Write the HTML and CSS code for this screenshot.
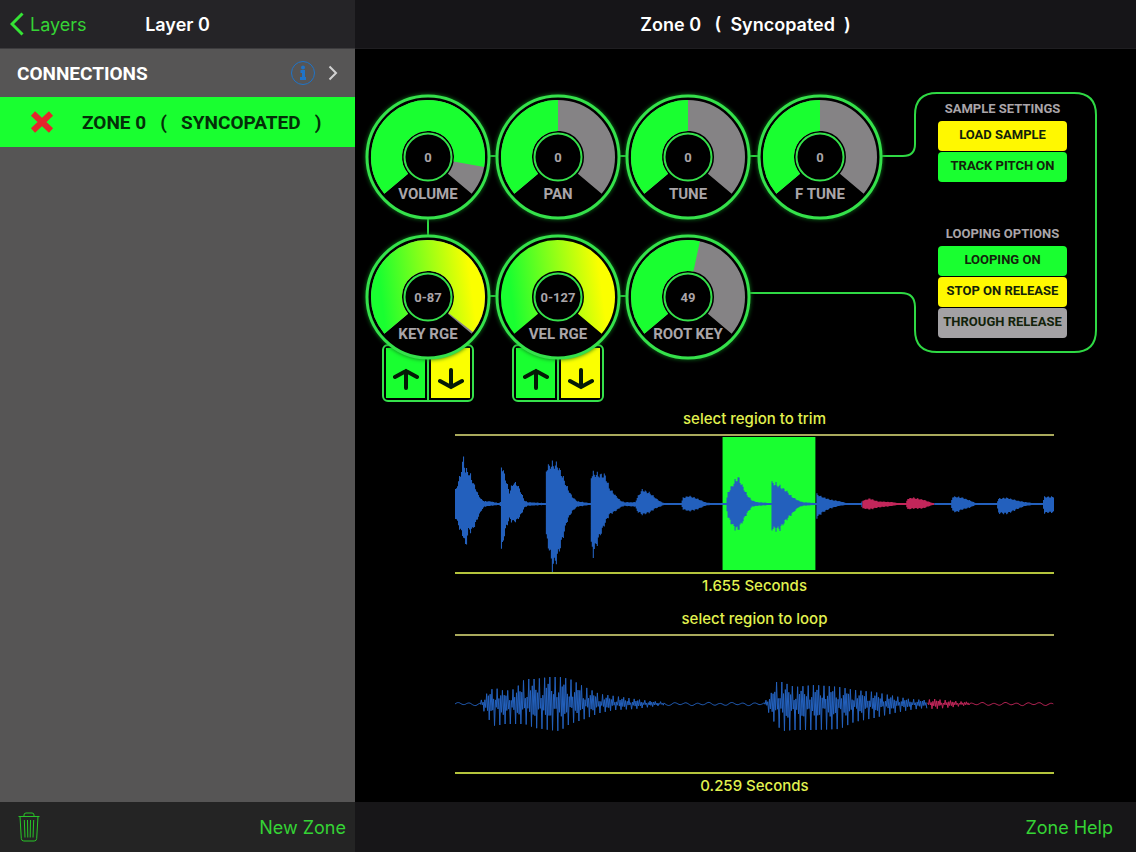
FILE: index.html
```html
<!DOCTYPE html>
<html lang="en">
<head>
  <meta charset="UTF-8" />
  <meta name="viewport" content="width=device-width, initial-scale=1.0"/>
  <title>Zone 0 - Syncopated</title>
  <link rel="stylesheet" href="styles.css">
</head>
<body>
  <aside class="sidebar">
    <header class="bar sidebar-bar">
      <a class="back" href="#layers">
        <svg width="14" height="24" viewBox="0 0 14 24"><path d="M12.500 1.500 2 12l10.500 10.500"/></svg>
        Layers
      </a>
      <h1 class="bar-title">Layer 0</h1>
    </header>

    <nav class="list">
      <a class="row connections" href="#connections">
        <span>CONNECTIONS</span>
        <svg class="info" width="26" height="26" viewBox="0 0 26 26">
          <circle cx="13" cy="13" r="11.500"/>
          <path class="info-i" d="M10.500 11.500h3v7M10 18.500h6"/>
          <circle class="info-dot" cx="13" cy="7.500" r="2"/>
        </svg>
        <svg class="chevron" width="10" height="16" viewBox="0 0 10 16"><path d="M1.500 1.500 8 8l-6.500 6.500"/></svg>
      </a>
      <div class="row zone">
        <button class="remove" aria-label="Remove zone">
          <svg width="24" height="24" viewBox="0 0 24 24"><path d="M3 3.500 21 20.500M21 3.500 3 20.500"/></svg>
        </button>
        <a class="zone-link" href="#zone-0">ZONE 0   (   SYNCOPATED   )</a>
      </div>
    </nav>

    <footer class="bar sidebar-foot">
      <button class="trash" aria-label="Delete">
        <svg width="22" height="30" viewBox="0 0 22 30">
          <path d="M.5 4.500h21M6 4.500V3q0-2 2-2h6q2 0 2 2v1.500M2 4.500l1.300 22q.2 2.500 2.500 2.500h10.400q2.300 0 2.500-2.500l1.300-22M6.300 8l.7 17.500M9.500 8l.3 17.500M12.500 8l-.3 17.500M15.700 8 15 25.500"/>
        </svg>
      </button>
      <button class="text-btn">New Zone</button>
    </footer>
  </aside>

  <main class="detail">
    <header class="bar detail-bar">
      <h2 class="bar-title">Zone 0   (  Syncopated  )</h2>
    </header>

    <div class="content">
      <section class="console">
        <svg class="wires" width="745" height="310" viewBox="0 0 745 310">
          <path d="M73 107H548Q560 107 560 95V66Q560 44 582 44H719Q741 44 741 66V281Q741 303 719 303H582Q560 303 560 281V258Q560 244 546 244H333M73 107V247H333"/>
        </svg>

        <div class="knobs">
          <div class="knob">
            <svg class="dial" viewBox="0 0 126 126">
              <circle class="ring" cx="63" cy="63" r="61"/>
              <circle class="track" cx="63" cy="63" r="41.500" pathLength="360"/>
              <circle class="fill" cx="63" cy="63" r="41.500" pathLength="360" stroke-dasharray="230 360"/>
              <circle class="hub" cx="63" cy="63" r="23.500"/>
            </svg>
            <output class="value" for="volume">0</output>
            <label class="name" for="volume">VOLUME</label>
            <input class="drag" type="range" id="volume" min="-90" max="12" value="0">
          </div>
          <div class="knob">
            <svg class="dial" viewBox="0 0 126 126">
              <circle class="ring" cx="63" cy="63" r="61"/>
              <circle class="track" cx="63" cy="63" r="41.500" pathLength="360"/>
              <circle class="fill" cx="63" cy="63" r="41.500" pathLength="360" stroke-dasharray="130 360"/>
              <circle class="hub" cx="63" cy="63" r="23.500"/>
            </svg>
            <output class="value" for="pan">0</output>
            <label class="name" for="pan">PAN</label>
            <input class="drag" type="range" id="pan" min="-100" max="100" value="0">
          </div>
          <div class="knob">
            <svg class="dial" viewBox="0 0 126 126">
              <circle class="ring" cx="63" cy="63" r="61"/>
              <circle class="track" cx="63" cy="63" r="41.500" pathLength="360"/>
              <circle class="fill" cx="63" cy="63" r="41.500" pathLength="360" stroke-dasharray="130 360"/>
              <circle class="hub" cx="63" cy="63" r="23.500"/>
            </svg>
            <output class="value" for="tune">0</output>
            <label class="name" for="tune">TUNE</label>
            <input class="drag" type="range" id="tune" min="-24" max="24" value="0">
          </div>
          <div class="knob">
            <svg class="dial" viewBox="0 0 126 126">
              <circle class="ring" cx="63" cy="63" r="61"/>
              <circle class="track" cx="63" cy="63" r="41.500" pathLength="360"/>
              <circle class="fill" cx="63" cy="63" r="41.500" pathLength="360" stroke-dasharray="130 360"/>
              <circle class="hub" cx="63" cy="63" r="23.500"/>
            </svg>
            <output class="value" for="ftune">0</output>
            <label class="name" for="ftune">F TUNE</label>
            <input class="drag" type="range" id="ftune" min="-100" max="100" value="0">
          </div>

          <div class="range-knob">
            <div class="knob">
              <svg class="dial" viewBox="0 0 126 126">
                <defs>
                  <linearGradient id="range" gradientUnits="userSpaceOnUse" x1="18" y1="76" x2="108" y2="64" gradientTransform="rotate(-140 63 63)">
                    <stop offset="0" stop-color="#19ff30"/>
                    <stop offset="1" stop-color="#fbff00"/>
                  </linearGradient>
                </defs>
                <circle class="ring" cx="63" cy="63" r="61"/>
                <circle class="track" cx="63" cy="63" r="41.500" pathLength="360"/>
                <circle class="fill fill-range" cx="63" cy="63" r="41.500" pathLength="360" stroke-dasharray="258 360"/>
                <circle class="hub" cx="63" cy="63" r="23.500"/>
              </svg>
              <output class="value" for="keys">0-87</output>
              <label class="name" for="keys">KEY RGE</label>
              <input class="drag" type="range" id="keys" min="0" max="88" value="87">
            </div>
            <div class="steps">
              <button class="step" aria-label="Low key"><svg width="26" height="24" viewBox="0 0 26 24"><path d="M13 21V4M2 10 13 4l11 6"/></svg></button>
              <button class="step step-high" aria-label="High key"><svg width="26" height="24" viewBox="0 0 26 24"><path d="M13 3V20M2 14l11 6 11-6"/></svg></button>
            </div>
          </div>
          <div class="range-knob">
            <div class="knob">
              <svg class="dial" viewBox="0 0 126 126">
                <circle class="ring" cx="63" cy="63" r="61"/>
                <circle class="fill fill-range" cx="63" cy="63" r="41.500" pathLength="360" stroke-dasharray="260 360"/>
                <circle class="hub" cx="63" cy="63" r="23.500"/>
              </svg>
              <output class="value" for="velocity">0-127</output>
              <label class="name" for="velocity">VEL RGE</label>
              <input class="drag" type="range" id="velocity" min="0" max="127" value="127">
            </div>
            <div class="steps">
              <button class="step" aria-label="Low velocity"><svg width="26" height="24" viewBox="0 0 26 24"><path d="M13 21V4M2 10 13 4l11 6"/></svg></button>
              <button class="step step-high" aria-label="High velocity"><svg width="26" height="24" viewBox="0 0 26 24"><path d="M13 3V20M2 14l11 6 11-6"/></svg></button>
            </div>
          </div>
          <div class="knob">
            <svg class="dial" viewBox="0 0 126 126">
              <circle class="ring" cx="63" cy="63" r="61"/>
              <circle class="track" cx="63" cy="63" r="41.500" pathLength="360"/>
              <circle class="fill" cx="63" cy="63" r="41.500" pathLength="360" stroke-dasharray="142 360"/>
              <circle class="hub" cx="63" cy="63" r="23.500"/>
            </svg>
            <output class="value" for="root">49</output>
            <label class="name" for="root">ROOT KEY</label>
            <input class="drag" type="range" id="root" min="0" max="88" value="49">
          </div>
        </div>

        <div class="panel">
          <div class="group">
            <h3 class="group-title">SAMPLE SETTINGS</h3>
            <button class="option yellow">LOAD SAMPLE</button>
            <button class="option green">TRACK PITCH ON</button>
          </div>
          <div class="group">
            <h3 class="group-title">LOOPING OPTIONS</h3>
            <button class="option green">LOOPING ON</button>
            <button class="option yellow">STOP ON RELEASE</button>
            <button class="option grey">THROUGH RELEASE</button>
          </div>
        </div>
      </section>

      <section class="waves">
        <figure class="wave">
          <figcaption class="caption">select region to trim</figcaption>
          <svg class="plot" id="trim" viewBox="0 0 600 136" preserveAspectRatio="none">
            <rect class="selection" x="268" y="1" width="93" height="133"/>
          </svg>
          <p class="caption">1.655 Seconds</p>
        </figure>
        <figure class="wave">
          <figcaption class="caption">select region to loop</figcaption>
          <svg class="plot" id="loop" viewBox="0 0 600 136" preserveAspectRatio="none"></svg>
          <p class="caption">0.259 Seconds</p>
        </figure>
      </section>
    </div>

    <footer class="bar detail-foot">
      <button class="text-btn">Zone Help</button>
    </footer>
  </main>

  <script src="waves.js"></script>
</body>
</html>
```
FILE: styles.css
```css
* {
  margin: 0;
  padding: 0;
  box-sizing: border-box;
}

body {
  display: grid;
  grid-template-columns: 355px 1fr;
  min-height: 100vh;
  background: #000;
  color: #fff;
  font-family: Inter, "Liberation Sans", sans-serif;
}

button {
  border: none;
  background: none;
  font: inherit;
  cursor: pointer;
}

a {
  color: inherit;
  text-decoration: none;
}

svg {
  display: block;
  fill: none;
}

.sidebar,
.detail {
  display: flex;
  flex-direction: column;
}

.sidebar {
  background: #565555;
}

/* top and bottom bars */
.bar {
  display: flex;
  align-items: center;
  height: 49px;
  background: #252427;
}

.sidebar-bar {
  display: grid;
  grid-template-columns: 1fr auto 1fr;
  padding: 0 10px;
  border-bottom: 1px solid #3d3c3e;
}

.bar-title {
  font-size: 18px;
  font-weight: 600;
  white-space: pre;
}

.back {
  display: flex;
  align-items: center;
  gap: 6px;
  color: #35d335;
  font-size: 18px;
}

.back svg {
  stroke: #35e335;
  stroke-width: 3;
}

.detail-bar {
  justify-content: center;
  border-bottom: 1px solid #1f1e21;
  background: #161518;
}

.sidebar-foot,
.detail-foot {
  height: 50px;
  margin-top: auto;
}

.sidebar-foot {
  justify-content: space-between;
  padding: 0 9px 0 18px;
  background: #242424;
}

.detail-foot {
  justify-content: flex-end;
  padding-right: 23px;
  background: #171618;
}

.trash svg {
  stroke: #28c428;
}

.text-btn {
  color: #35d335;
  font-size: 18px;
}

/* sidebar list */
.row {
  display: flex;
  align-items: center;
  font-family: Roboto, sans-serif;
  font-size: 19px;
  font-weight: 700;
}

.connections {
  height: 48px;
  padding: 0 17px;
}

.info {
  margin-left: auto;
  stroke: #1f74c8;
}

.info-i {
  stroke-width: 3;
}

.info-dot {
  fill: #1f74c8;
  stroke: none;
}

.chevron {
  margin-left: 12px;
  stroke: #d2d2d2;
  stroke-width: 2;
}

.zone {
  height: 50px;
  padding-left: 30px;
  gap: 28px;
  background: #19ff30;
  color: #042f08;
}

.remove svg {
  stroke: #e4262c;
  stroke-width: 6;
}

.zone-link {
  white-space: pre;
}

/* knobs and wiring */
.console {
  position: relative;
  display: flex;
  gap: 30px;
  padding: 45px 0 0 10px;
}

.wires {
  position: absolute;
  top: 0;
  left: 0;
  stroke: #2fd944;
  stroke-width: 2;
}

.knobs {
  position: relative;
  display: grid;
  grid-template-columns: repeat(4, 130px);
  row-gap: 14px;
}

.knob {
  position: relative;
  z-index: 1;
  display: grid;
  width: 126px;
  height: 126px;
  font-family: Roboto, sans-serif;
  font-weight: 700;
  color: #aaa5a9;
}

.knob:nth-child(4) {
  justify-self: center;
}

.knob > * {
  grid-area: 1 / 1;
}

.dial {
  width: 126px;
  height: 126px;
  overflow: visible;
}

.ring {
  fill: #000;
  stroke: #35e14b;
  stroke-width: 3;
  filter: drop-shadow(0 0 2px #0d7a1c);
}

.track,
.fill {
  stroke-width: 31;
  transform: rotate(140deg);
  transform-origin: 63px 63px;
}

.track {
  stroke: #858385;
  stroke-dasharray: 260 360;
}

.fill {
  stroke: #19ff30;
}

.fill-range {
  stroke: url(#range);
}

.hub {
  stroke: #35e14b;
  stroke-width: 2;
}

.value {
  align-self: center;
  justify-self: center;
  font-size: 13px;
}

.name {
  align-self: end;
  justify-self: center;
  margin-bottom: 17px;
  font-size: 15px;
  line-height: 18px;
}

.drag {
  width: 100%;
  height: 100%;
  opacity: 0;
  cursor: pointer;
}

.steps {
  display: flex;
  gap: 6px;
  width: 92px;
  height: 58px;
  margin: -16px 0 0 17px;
  padding: 2px;
  border: 2px solid #35e14b;
  border-radius: 6px;
  background: linear-gradient(#35e14b, #35e14b) center / 2px 100% no-repeat;
}

.step {
  flex: 1;
  display: flex;
  align-items: flex-end;
  justify-content: center;
  padding-bottom: 7px;
  background: #19ff30;
}

.step-high {
  background: #fbff00;
}

.step svg {
  stroke: #041a06;
  stroke-width: 4;
  stroke-linecap: round;
}

/* sample and looping options */
.panel {
  position: relative;
  display: flex;
  flex-direction: column;
  gap: 44px;
  width: 181px;
  padding: 7px 29px 0 23px;
}

.group {
  display: flex;
  flex-direction: column;
  gap: 1px;
  font-family: Roboto, sans-serif;
}

.group-title {
  margin-bottom: 3px;
  color: #aaa5a9;
  font-size: 13px;
  font-weight: 700;
  line-height: 16px;
  text-align: center;
  white-space: nowrap;
}

.option {
  height: 30px;
  padding-bottom: 3px;
  border-radius: 4px;
  color: #12220a;
  font-size: 13px;
  font-weight: 700;
  white-space: nowrap;
}

.yellow {
  background: #fff800;
}

.green {
  background: #19ff30;
}

.grey {
  background: #a3a1a4;
}

/* waveforms */
.waves {
  display: flex;
  flex-direction: column;
  gap: 13px;
  padding: 7px 82px 4px 100px;
}

.caption {
  color: #e2f24f;
  font-size: 15px;
  font-weight: 500;
  line-height: 20px;
  text-align: center;
}

.plot {
  width: 100%;
  height: 140px;
  margin: 5px 0 2px;
  border-top: 2px solid #a9a95c;
  border-bottom: 2px solid #b4c43c;
}

.selection {
  fill: #19ff30;
}

.blue {
  fill: #2360bd;
}

.red {
  fill: #c2265a;
}

.line-blue {
  stroke: #2360bd;
}

.line-red {
  stroke: #c2265a;
}
```
FILE: waves.js
```js
const MID = 68;

// [x, peak above the centre line, peak below it]
const trimEnvelope = [
  [0, 15, 15], [5, 33, 30], [8, 52, 37], [10, 38, 48], [13, 36, 30], [17, 26, 29],
  [20, 18, 22], [23, 10, 14], [26, 5, 7], [29, 3, 3], [35, 3, 2], [43, 1, 1],
  [45, 2, 2], [46, 44, 54], [48, 37, 40], [51, 25, 25], [54, 13, 17], [58, 24, 20],
  [62, 22, 18], [66, 12, 11], [69, 4, 4], [72, 2, 2], [90, 1, 1],
  [91, 40, 37], [95, 44, 57], [97, 44, 72], [102, 44, 60], [107, 32, 40],
  [112, 18, 18], [117, 8, 8], [122, 3, 3], [135, 1, 1],
  [136, 32, 47], [138, 34, 55], [143, 33, 40], [150, 32, 21], [154, 18, 12],
  [160, 10, 8], [165, 4, 4], [169, 2, 2], [180, 2, 3],
  [182, 7, 8], [187, 16, 12], [195, 12, 9], [200, 7, 5], [205, 3, 3], [209, 1, 1], [226, 1, 1],
  [228, 7, 6], [234, 9, 8], [242, 6, 6], [250, 2, 2], [255, 1, 1], [271, 1, 1],
  [273, 13, 15], [278, 22, 25], [283, 30, 29], [288, 19, 19], [292, 10, 10], [297, 4, 3],
  [302, 2, 2], [316, 1, 1],
  [317, 24, 28], [325, 20, 28], [331, 15, 18], [337, 8, 11], [343, 4, 4], [348, 2, 2], [361, 1, 1],
  [362, 11, 15], [367, 8, 10], [375, 5, 5], [385, 3, 2], [392, 1, 1], [406, 1, 1],
  [408, 4, 5], [415, 6, 6], [423, 3, 4], [438, 2, 2], [444, 1, 1], [451, 1, 1],
  [453, 6, 6], [458, 7, 5], [468, 5, 5], [478, 1, 1], [496, 1, 1],
  [498, 8, 8], [502, 8, 9], [508, 7, 6], [515, 4, 4], [521, 1, 1], [542, 1, 1],
  [544, 6, 10], [552, 7, 11], [562, 4, 6], [571, 2, 2], [580, 1, 1], [588, 1, 1],
  [590, 8, 10], [600, 8, 9]
];

const loopEnvelope = [
  [0, 2, 1], [25, 2, 1], [27, 5, 4], [35, 14, 17], [40, 16, 22], [50, 13, 20], [60, 15, 20],
  [70, 25, 20], [80, 25, 24], [95, 27, 26], [105, 27, 27], [115, 25, 20], [130, 17, 15],
  [145, 10, 9], [160, 8, 6], [180, 5, 5], [195, 3, 3], [210, 2, 1], [310, 2, 1],
  [316, 9, 12], [321, 22, 20], [328, 22, 27], [340, 17, 26], [360, 19, 26], [385, 17, 25],
  [400, 14, 18], [420, 12, 14], [440, 8, 9], [455, 5, 6], [470, 4, 4], [480, 5, 5],
  [500, 3, 3], [515, 2, 1], [600, 1, 1]
];

function level(envelope, x, side) {
  let i = 1;
  while (i < envelope.length - 1 && envelope[i][0] < x) i++;
  const a = envelope[i - 1];
  const b = envelope[i];
  const t = (x - a[0]) / (b[0] - a[0]);
  return a[side] + (b[side] - a[side]) * t;
}

function addPath(svg, d, className) {
  const path = document.createElementNS('http://www.w3.org/2000/svg', 'path');
  path.setAttribute('d', d);
  path.setAttribute('class', className);
  svg.appendChild(path);
}

// one filled bar for each column
function drawTrim(from, to, className) {
  let d = '';
  for (let x = from; x < to; x++) {
    const rough = 1 - 0.2 * Math.abs(Math.sin(x * 2.3));
    const up = Math.max(1, level(trimEnvelope, x, 1) * rough);
    const down = Math.max(1, level(trimEnvelope, x, 2) * rough);
    d += `M${x} ${MID - up}h1.100V${MID + down}h-1.100z`;
  }
  addPath(document.getElementById('trim'), d, className);
}

function drawLoop(from, to, className) {
  // each cycle: tall peak, small dip, small peak, deep dip
  const shape = [1, -0.35, 0.45, -1, 0.5, -0.3];
  let d = '';
  for (let i = 0; ; i++) {
    const x = i * 0.88;
    if (x < from) continue;
    if (x > to) break;
    let s = shape[i % 6];
    if (Math.abs(s) < 1) s *= 1 + 0.5 * Math.sin(i * 0.37);
    let y = s > 0 ? level(loopEnvelope, x, 1) * s : level(loopEnvelope, x, 2) * s;
    if (level(loopEnvelope, x, 1) <= 2) y = Math.sin(x * 0.55) * 1.1 + Math.sin(x * 0.23) * 0.5;
    d += (d ? 'L' : 'M') + x.toFixed(1) + ' ' + (MID - y).toFixed(1);
  }
  addPath(document.getElementById('loop'), d, className);
}

drawTrim(0, 408, 'blue');
drawTrim(408, 480, 'red');
drawTrim(480, 600, 'blue');
drawLoop(0, 473, 'line-blue');
drawLoop(473, 600, 'line-red');
```
